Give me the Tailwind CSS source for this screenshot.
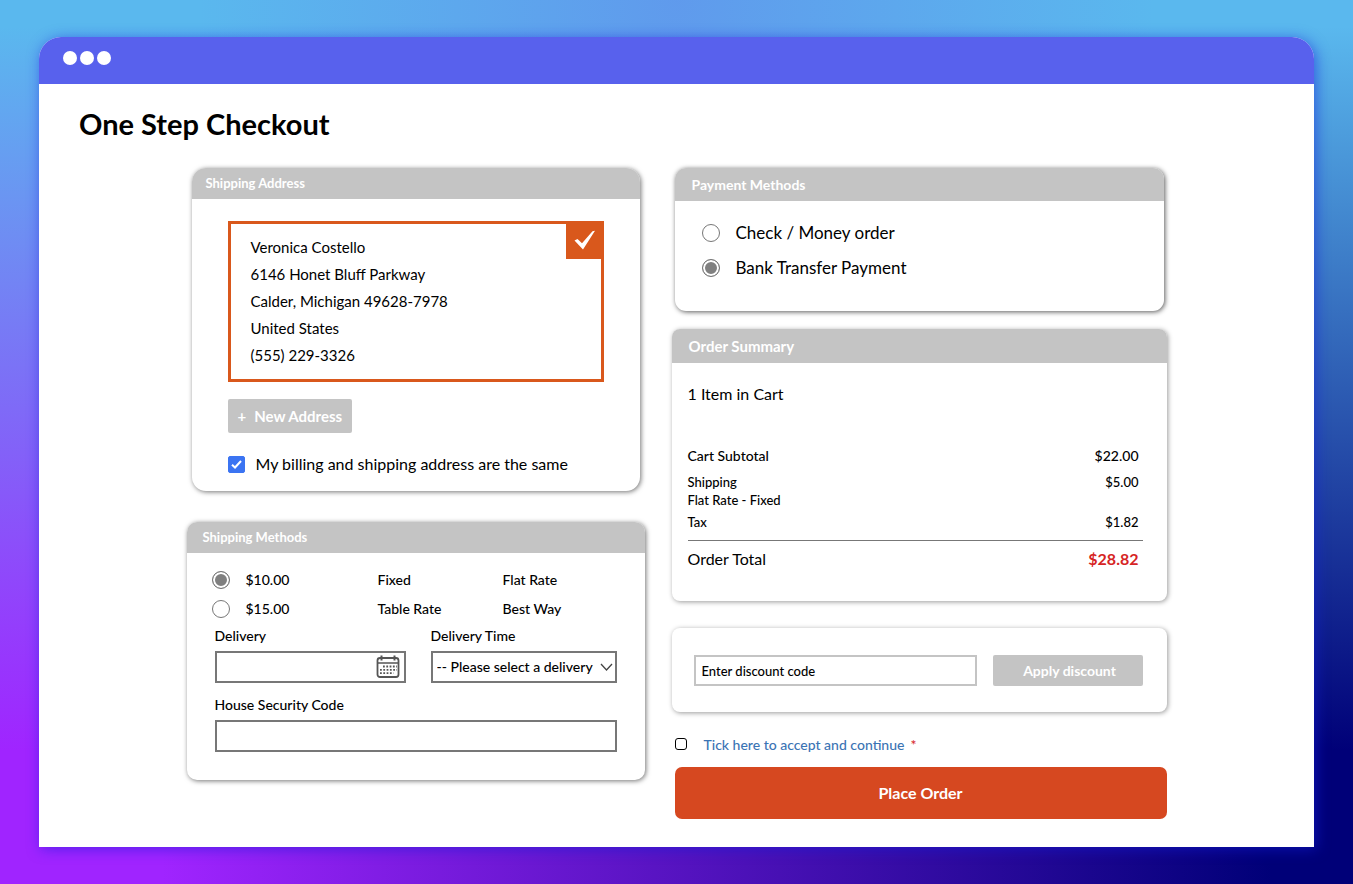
<!DOCTYPE html>
<html lang="en">
<head>
  <meta charset="UTF-8">
  <meta name="viewport" content="width=device-width, initial-scale=1.0">
  <title>One Step Checkout</title>
  <script src="https://cdn.jsdelivr.net/npm/@tailwindcss/browser@4"></script>
</head>
<body class="min-h-screen bg-[radial-gradient(ellipse_at_50%_0%,rgba(100,130,235,0.55)_0%,rgba(100,130,235,0)_50%),linear-gradient(to_bottom,#5ab8ee_3%,rgba(90,184,238,0)_85%),linear-gradient(to_right,#a024ff_12%,#000078_94%)] px-[39px] py-[37px] font-['Lato',sans-serif] text-black">
  <div class="overflow-hidden rounded-t-[22px] bg-white shadow-[2px_2px_14px_rgba(20,30,220,0.55)]">
    <div class="flex h-[47px] items-start gap-[3px] bg-[#5861ed] px-6 pt-[14px]">
      <span class="size-[14px] rounded-full bg-white"></span>
      <span class="size-[14px] rounded-full bg-white"></span>
      <span class="size-[14px] rounded-full bg-white"></span>
    </div>

    <main class="px-10 pt-5 pb-7">
      <h1 class="text-[29px] leading-10 font-bold">One Step Checkout</h1>

      <div class="mx-auto mt-6 grid max-w-[980px] grid-cols-[458fr_495fr] gap-[27px]">
        <div class="min-w-0">
          <!-- Shipping address -->
          <section class="mx-[5px] overflow-hidden rounded-[14px] bg-white shadow-[1px_1px_5px_rgba(0,0,0,0.55)]">
            <h2 class="bg-[#c4c4c4] px-[14px] text-[13px] leading-[31px] font-bold text-white">Shipping Address</h2>
            <div class="px-9 pt-[22px] pb-[14px]">
              <div class="relative border-3 border-[#d9581c] px-5 py-[10px] text-[15px] leading-[27px]">
                <p>Veronica Costello</p>
                <p>6146 Honet Bluff Parkway</p>
                <p>Calder, Michigan 49628-7978</p>
                <p>United States</p>
                <p>(555) 229-3326</p>
                <div class="absolute -top-[3px] -right-[3px] size-[38px] bg-[#d9581c]">
                  <svg class="size-full" viewBox="0 0 38 38" fill="#fff"><path d="M8.500 19.500 11.500 18 16 22.200 26.500 10.200 29 9.800 17 28.500Z"/></svg>
                </div>
              </div>
              <button type="button" class="mt-[17px] flex h-[34px] items-center gap-2 rounded-[2px] bg-[#c4c4c4] px-[10px] text-[15px] font-bold text-white"><span>+</span><span>New Address</span></button>
              <label class="mt-[18px] flex items-center gap-[11px] text-base leading-[26px]">
                <span class="grid size-[17px]">
                  <input type="checkbox" checked class="peer col-start-1 row-start-1 size-[17px] appearance-none rounded-[2px] border border-gray-500 checked:border-[#3b74f2] checked:bg-[#3b74f2]">
                  <svg class="pointer-events-none invisible col-start-1 row-start-1 size-[17px] peer-checked:visible" viewBox="0 0 17 17" fill="none" stroke="#fff" stroke-width="2"><path d="M4 8.8 7 11.5 13 5"/></svg>
                </span>
                My billing and shipping address are the same
              </label>
            </div>
          </section>

          <!-- Shipping methods -->
          <section class="mt-[31px] overflow-hidden rounded-[10px] bg-white shadow-[1px_1px_5px_rgba(0,0,0,0.55)]">
            <h2 class="bg-[#c4c4c4] px-4 text-[13px] leading-[31px] font-bold text-white">Shipping Methods</h2>
            <div class="px-7 pt-3 pb-7 text-[14px] font-medium">
              <label class="-ml-[3px] grid h-[29px] grid-cols-[34px_132px_125px_1fr] items-center">
                <input type="radio" name="shipping" checked class="size-[18px] appearance-none rounded-full border border-[#777] checked:bg-[#808080] checked:shadow-[inset_0_0_0_2px_#fff]">
                <span>$10.00</span><span>Fixed</span><span>Flat Rate</span>
              </label>
              <label class="-ml-[3px] grid h-[29px] grid-cols-[34px_132px_125px_1fr] items-center">
                <input type="radio" name="shipping" class="size-[18px] appearance-none rounded-full border border-[#777] checked:bg-[#808080] checked:shadow-[inset_0_0_0_2px_#fff]">
                <span>$15.00</span><span>Table Rate</span><span>Best Way</span>
              </label>
              <div class="mt-[2px] grid grid-cols-[191fr_186fr] gap-[25px]">
                <div class="min-w-0">
                  <label for="delivery" class="block leading-[22px]">Delivery</label>
                  <div class="mt-1 flex h-8 items-center border-2 border-[#777] pr-1">
                    <input type="text" id="delivery" class="h-full min-w-0 flex-1 px-2 outline-none">
                    <svg class="size-6" viewBox="0 0 24 24" fill="none" stroke="#555">
                      <rect x="1.5" y="3" width="21" height="19" rx="2.5" stroke-width="1.8"/>
                      <path d="M1.5 8h21" stroke-width="1.5"/>
                      <path d="M5.5 0.5v5M18.5 0.5v5" stroke-width="2"/>
                      <path d="M7 11.5h14M4 14.8h17M4 18.2h13.5" stroke-width="1.8" stroke-dasharray="1.8 1.5"/>
                    </svg>
                  </div>
                </div>
                <div class="min-w-0">
                  <label for="time" class="block leading-[22px]">Delivery Time</label>
                  <div class="relative mt-1">
                    <select id="time" class="h-8 w-full appearance-none border-2 border-[#777] bg-white pr-4 pb-[2px] pl-1 outline-none">
                      <option>-- Please select a delivery</option>
                    </select>
                    <svg class="pointer-events-none absolute top-[10px] right-1 h-3 w-[13px]" viewBox="0 0 13 12" fill="none" stroke="#444" stroke-width="1.3"><path d="M1 3l5.500 6L12 3"/></svg>
                  </div>
                </div>
              </div>
              <label for="security" class="mt-[11px] block leading-[22px]">House Security Code</label>
              <input type="text" id="security" class="mt-1 block h-8 w-full border-2 border-[#777] px-2 outline-none">
            </div>
          </section>
        </div>

        <div class="min-w-0">
          <!-- Payment methods -->
          <section class="mx-[3px] overflow-hidden rounded-[11px] bg-white shadow-[1px_1px_5px_rgba(0,0,0,0.65)]">
            <h2 class="bg-[#c4c4c4] px-[17px] text-[14px] leading-[33px] font-bold text-white">Payment Methods</h2>
            <div class="px-[27px] pt-[14px] pb-[26px] text-[17px]">
              <label class="flex h-[35px] items-center gap-4">
                <input type="radio" name="payment" class="size-[18px] appearance-none rounded-full border border-[#777] checked:bg-[#808080] checked:shadow-[inset_0_0_0_2px_#fff]">
                Check / Money order
              </label>
              <label class="flex h-[35px] items-center gap-4">
                <input type="radio" name="payment" checked class="size-[18px] appearance-none rounded-full border border-[#777] checked:bg-[#808080] checked:shadow-[inset_0_0_0_2px_#fff]">
                Bank Transfer Payment
              </label>
            </div>
          </section>

          <!-- Order summary -->
          <section class="mt-[18px] overflow-hidden rounded-[8px] bg-white shadow-[1px_1px_5px_rgba(0,0,0,0.4)]">
            <h2 class="bg-[#c4c4c4] px-[17px] text-[15px] leading-[34px] font-bold text-white">Order Summary</h2>
            <div class="pt-[18px] pr-6 pb-[23px] pl-4">
              <p class="text-base leading-[26px]">1 Item in Cart</p>
              <table class="mt-[35px] w-full">
                <tbody>
                  <tr class="h-[27px] text-[14px] font-medium"><td>Cart Subtotal</td><td class="pr-1 text-right">$22.00</td></tr>
                  <tr class="text-[13px] leading-[18px] font-medium"><td class="pt-1">Shipping<br>Flat Rate - Fixed</td><td class="pt-1 pr-1 text-right align-top">$5.00</td></tr>
                  <tr class="h-[31px] border-b border-[#777] text-[13px] font-medium"><td class="pb-1">Tax</td><td class="pr-1 pb-1 text-right">$1.82</td></tr>
                  <tr class="h-[38px] text-base"><td>Order Total</td><td class="pr-1 text-right font-bold text-[#d62424]">$28.82</td></tr>
                </tbody>
              </table>
            </div>
          </section>

          <!-- Discount -->
          <section class="mt-[27px] flex gap-4 rounded-[8px] bg-white pt-[27px] pr-6 pb-[26px] pl-[22px] shadow-[1px_1px_5px_rgba(0,0,0,0.4)]">
            <input type="text" aria-label="Discount code" placeholder="Enter discount code" class="h-[31px] min-w-0 flex-1 border-2 border-[#c4c4c4] px-[6px] text-[13px] font-medium outline-none placeholder:text-black">
            <button type="button" class="h-[31px] w-[150px] rounded-[2px] bg-[#c4c4c4] pl-1 text-[14px] font-bold text-white">Apply discount</button>
          </section>

          <label class="mt-5 ml-[3px] flex h-6 items-center text-[14px] font-medium text-[#3b74b4]">
            <input type="checkbox" class="mr-[17px] size-3 appearance-none rounded-[3px] border border-black checked:bg-black">
            Tick here to accept and continue<span class="ml-[6px] text-[#d62424]">*</span>
          </label>
          <button type="submit" class="mt-[11px] ml-[3px] block h-[52px] w-[calc(100%-3px)] rounded-[7px] bg-[#d64820] text-base font-bold text-white">Place Order</button>
        </div>
      </div>
    </main>
  </div>
</body>
</html>
